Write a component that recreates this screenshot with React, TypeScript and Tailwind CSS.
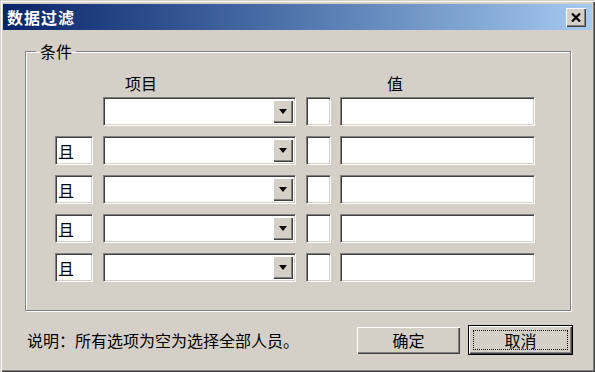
const sunken =
  "border border-t-[#808080] border-l-[#808080] border-b-white border-r-white shadow-[inset_1px_1px_0_#404040,inset_-1px_-1px_0_#d4d0c8] bg-white";
const raised =
  "bg-[#d4d0c8] shadow-[inset_1px_1px_0_#ffffff,inset_-1px_-1px_0_#404040,inset_-2px_-2px_0_#808080]";

const rows = [false, true, true, true, true];

function Combo() {
  return (
    <div className={`${sunken} w-[193px] h-[29px] flex justify-end p-[2px]`}>
      <div className={`${raised} w-[20px] h-full flex items-center justify-center`}>
        <svg width="8" height="5" viewBox="0 0 8 5">
          <path d="M0 0h8L4 5z" fill="#000" />
        </svg>
      </div>
    </div>
  );
}

export default function App() {
  return (
    <div
      className="w-[595px] h-[372px] bg-[#d4d0c8] flex flex-col pt-[4px] px-[3px] shadow-[inset_1px_1px_0_#d4d0c8,inset_2px_2px_0_#ffffff,inset_-1px_-1px_0_#404040,inset_-2px_-2px_0_#808080] text-black"
      style={{ fontFamily: '"Noto Sans CJK SC", "Noto Sans", sans-serif' }}
    >
      {/* Title bar */}
      <div className="h-[26px] flex items-center justify-between pl-[4px] pr-[6px] bg-linear-to-r from-[#0a246a] to-[#a6caf0]">
        <span className="text-white font-bold text-[16px] leading-none tracking-[1px]">数据过滤</span>
        <div className={`${raised} w-[20px] h-[19px] flex items-center justify-center`}>
          <svg width="10" height="9" viewBox="0 0 10 9">
            <path d="M1 0.5l8 8M9 0.5l-8 8" stroke="#000" strokeWidth="2.2" />
          </svg>
        </div>
      </div>

      {/* Condition group */}
      <fieldset className="ml-[22px] mt-[11px] w-[546px] h-[270px] border border-[#808080] shadow-[inset_1px_1px_0_#ffffff,1px_1px_0_#ffffff]">
        <legend className="ml-[10px] px-[4px] text-[16px] leading-[20px]">条件</legend>
        <div className="flex flex-col gap-[4px] pt-[12px] pl-[29px]">
          <div className="flex text-[16px] leading-[20px]">
            <div className="w-[48px]" />
            <div className="w-[193px] pl-[22px]">项目</div>
            <div className="w-[44px]" />
            <div className="pl-[47px]">值</div>
          </div>
          <div className="flex flex-col gap-[10px]">
            {rows.map((hasAnd, i) => (
              <div key={i} className="flex items-center">
                {hasAnd ? (
                  <div className={`${sunken} w-[38px] h-[29px] flex items-center pl-[2px] text-[16px]`}>且</div>
                ) : (
                  <div className="w-[38px]" />
                )}
                <div className="w-[10px]" />
                <Combo />
                <div className={`${sunken} ml-[10px] w-[25px] h-[29px]`} />
                <div className={`${sunken} ml-[9px] w-[195px] h-[29px]`} />
              </div>
            ))}
          </div>
        </div>
      </fieldset>

      {/* Footer */}
      <div className="flex items-center mt-[14px] h-[30px] pl-[24px] pr-[19px]">
        <span className="text-[16px] leading-[20px]">说明：所有选项为空为选择全部人员。</span>
        <div className="ml-auto flex items-center gap-[8px]">
          <button className={`${raised} w-[103px] h-[27px] text-[16px] leading-none`}>确定</button>
          <div className="border border-black">
            <button className={`${raised} w-[103px] h-[28px] text-[16px] leading-none flex items-center justify-center p-[4px]`}>
              <span className="w-full h-full flex items-center justify-center border border-dotted border-black">取消</span>
            </button>
          </div>
        </div>
      </div>
    </div>
  );
}
